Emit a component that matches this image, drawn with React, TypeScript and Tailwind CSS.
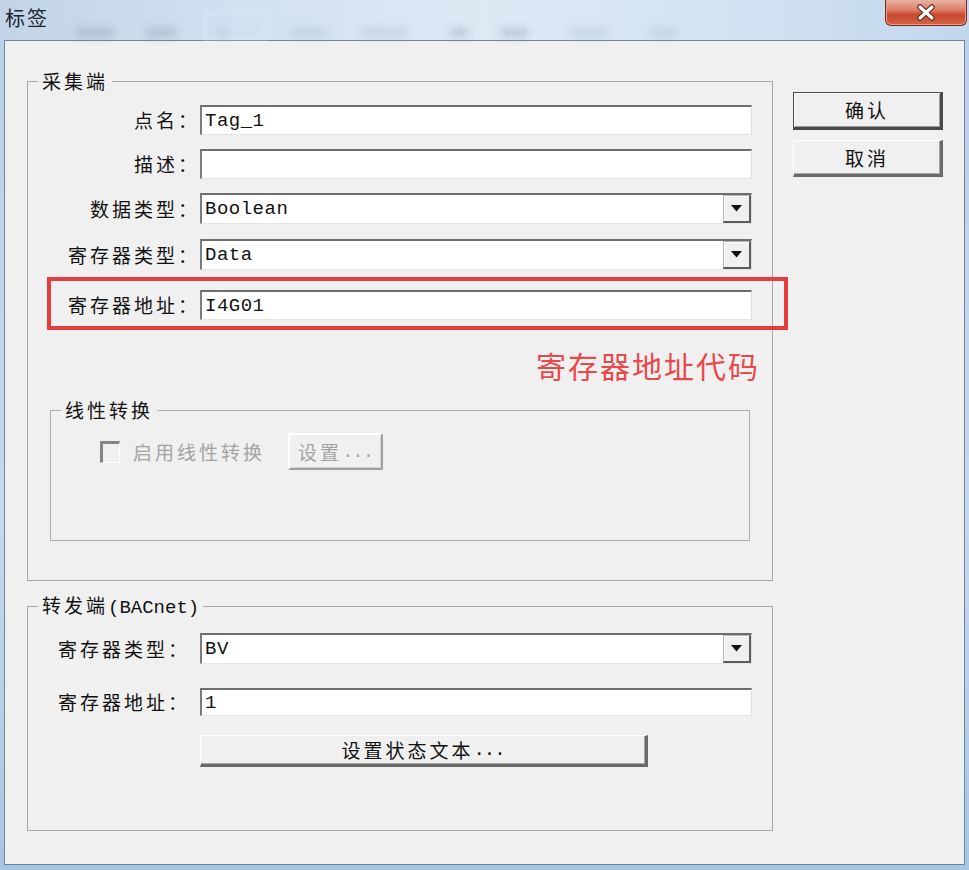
import React from "react";

const CJK = "font-['Noto_Sans_CJK_SC','Noto_Sans',sans-serif]";
const MONO = "font-['Liberation_Mono','DejaVu_Sans_Mono',monospace]";

function DropButton() {
  return (
    <div className="flex h-full w-[28px] shrink-0 items-center justify-center border-t border-l border-t-[#b4b4b4] border-l-[#b4b4b4] border-r-2 border-b-2 border-r-[#5c5c5c] border-b-[#5c5c5c] bg-[#f0f0f0] shadow-[inset_1px_1px_0_#ffffff]">
      <svg width="11" height="7" viewBox="0 0 11 7">
        <polygon points="0,0 11,0 5.5,6.5" fill="#111" />
      </svg>
    </div>
  );
}

function Field({ value, dropdown = false, width = 552 }: { value: string; dropdown?: boolean; width?: number }) {
  return (
    <div
      className="flex h-full items-center bg-white border-t-2 border-l-2 border-t-[#6e6e6e] border-l-[#7c7c7c] border-b border-r border-b-[#e4e4e4] border-r-[#dedede]"
      style={{ width }}
    >
      <span className={`flex-1 pl-[3px] text-[19px] leading-[26px] tracking-[0.5px] text-[#111] ${MONO}`}>{value}</span>
      {dropdown && <DropButton />}
    </div>
  );
}

function Label({ text, w }: { text: string; w: string }) {
  return <div className={`${w} shrink-0 text-right text-[19px] leading-[30px] tracking-[3px] text-[#111]`}>{text}</div>;
}

function CloseButton() {
  return (
    <div className="mr-[2px] flex h-[26px] w-[82px] items-center justify-center rounded-b-[6px] border border-t-0 border-[#7b2b1f] bg-[linear-gradient(180deg,#eab3a4_0%,#dc7d66_40%,#c8472f_60%,#d4654b_100%)] shadow-[inset_0_-1px_0_#e89a84,inset_1px_0_0_#e79c88,inset_-1px_0_0_#e79c88]">
      <svg width="20" height="17" viewBox="0 0 20 17">
        <path d="M4 3 L16 14 M16 3 L4 14" stroke="#6b2418" strokeWidth="5.5" strokeLinecap="round" />
        <path d="M4 3 L16 14 M16 3 L4 14" stroke="#ffffff" strokeWidth="3.2" strokeLinecap="round" />
      </svg>
    </div>
  );
}

function Blob({ w, ml, dark = true }: { w: number; ml: number; dark?: boolean }) {
  return (
    <span
      className={dark ? "h-[9px] rounded-full bg-[#8597ab] opacity-40 blur-[4px]" : "h-[9px] rounded-full bg-[#9aacc0] opacity-30 blur-[4px]"}
      style={{ width: w, marginLeft: ml }}
    />
  );
}

export default function App() {
  return (
    <div className={`flex h-[870px] w-[969px] flex-col overflow-hidden bg-[linear-gradient(180deg,#bad0e8_0%,#c6d9ee_60%,#a9c5e3_100%)] ${CJK}`}>
      {/* Title bar */}
      <div className="relative flex h-[40px] shrink-0 items-start justify-between bg-[linear-gradient(90deg,#c2d4e7_0%,#d2e1f0_25%,#dde9f5_50%,#d3e3f2_75%,#c2d7ec_100%)]">
        <span className="pl-[5px] pt-[4px] text-[20px] leading-[28px] tracking-[2px] text-[#1d2733]">标签</span>
        <CloseButton />
        <div className="pointer-events-none absolute bottom-[3px] left-0 flex items-center">
          <Blob w={40} ml={75} />
          <Blob w={32} ml={30} />
          <Blob w={12} ml={40} dark={false} />
          <Blob w={40} ml={60} dark={false} />
          <Blob w={50} ml={30} dark={false} />
          <Blob w={20} ml={40} />
          <Blob w={30} ml={30} />
          <Blob w={40} ml={40} dark={false} />
          <Blob w={30} ml={40} dark={false} />
        </div>
        <div className="pointer-events-none absolute left-[204px] top-[12px] h-[30px] w-[62px] border-2 border-[#e8f0f8] opacity-50 blur-[2px]" />
      </div>

      {/* Client area */}
      <div className="mx-[4px] mb-[5px] flex flex-1 border border-[#70849a] bg-[#f0f0f0]">
        {/* Left column */}
        <div className="flex flex-col pl-[22px] pt-[26px]">
          {/* 采集端 */}
          <fieldset className="h-[514px] w-[746px] border border-[#a8a8a8]">
            <legend className="ml-[10px] px-[4px] text-[19px] leading-[28px] tracking-[3px] text-[#111]">采集端</legend>
            <div className="flex flex-col">
              <div className="mt-[10px] flex h-[30px] items-center">
                <Label text="点名：" w="w-[172px]" />
                <div className="h-full">
                  <Field value="Tag_1" />
                </div>
              </div>
              <div className="mt-[14px] flex h-[30px] items-center">
                <Label text="描述：" w="w-[172px]" />
                <div className="h-full">
                  <Field value="" />
                </div>
              </div>
              <div className="mt-[14px] flex h-[31px] items-center">
                <Label text="数据类型：" w="w-[172px]" />
                <div className="h-full">
                  <Field value="Boolean" dropdown />
                </div>
              </div>
              <div className="mt-[15px] flex h-[31px] items-center">
                <Label text="寄存器类型：" w="w-[172px]" />
                <div className="h-full">
                  <Field value="Data" dropdown />
                </div>
              </div>
              <div className="relative mt-[20px] flex h-[30px] items-center">
                <Label text="寄存器地址：" w="w-[172px]" />
                <div className="h-full">
                  <Field value="I4G01" />
                </div>
                <div className="pointer-events-none absolute left-[19px] top-[-13px] h-[53px] w-[741px] border-[4px] border-[#e63c3e]" />
              </div>
              <div className="mt-[25px] pr-[12px] text-right text-[30px] leading-[40px] tracking-[2px] text-[#e8494b]">
                寄存器地址代码
              </div>

              {/* 线性转换 */}
              <fieldset className="ml-[22px] mt-[11px] h-[145px] w-[700px] border border-[#adadad]">
                <legend className="ml-[10px] px-[4px] text-[19px] leading-[28px] tracking-[3px] text-[#111]">线性转换</legend>
                <div className="mt-[9px] flex h-[37px] items-center pl-[49px]">
                  <div className="h-[22px] w-[20px] border-t-[3px] border-l-[3px] border-t-[#858585] border-l-[#858585] border-b border-r border-b-[#ffffff] border-r-[#ffffff] bg-[#f0f0f0]" />
                  <span className="ml-[13px] text-[19px] leading-[30px] tracking-[3px] text-[#a3a3a3]">启用线性转换</span>
                  <div className="ml-[23px] flex h-[37px] w-[95px] items-center justify-center border-t-2 border-l-2 border-t-[#ffffff] border-l-[#ffffff] border-b-2 border-r-2 border-b-[#a0a0a0] border-r-[#a0a0a0] bg-[#f0f0f0] shadow-[inset_-1px_-1px_0_#d4d4d4]">
                    <span className="text-[19px] leading-[30px] tracking-[3px] text-[#a3a3a3]">设置</span>
                    <span className={`text-[19px] leading-[30px] tracking-[-1px] text-[#a3a3a3] ${MONO}`}>...</span>
                  </div>
                </div>
              </fieldset>
            </div>
          </fieldset>

          {/* 转发端(BACnet) */}
          <fieldset className="mt-[10px] h-[240px] w-[746px] border border-[#a8a8a8]">
            <legend className="ml-[10px] px-[4px] text-[19px] leading-[28px] text-[#111]">
              <span className="tracking-[3px]">转发端</span>
              <span className={`${MONO} tracking-[0px]`}>(BACnet)</span>
            </legend>
            <div className="flex flex-col">
              <div className="mt-[11px] flex h-[31px] items-center">
                <Label text="寄存器类型：" w="w-[162px]" />
                <div className="ml-[10px] h-full">
                  <Field value="BV" dropdown />
                </div>
              </div>
              <div className="mt-[24px] flex h-[28px] items-center">
                <Label text="寄存器地址：" w="w-[162px]" />
                <div className="ml-[10px] h-full">
                  <Field value="1" />
                </div>
              </div>
              <div className="ml-[172px] mt-[19px] flex h-[32px] w-[448px] items-center justify-center border-t border-l border-t-[#ffffff] border-l-[#ffffff] border-b-[3px] border-r-[3px] border-b-[#6a6a6a] border-r-[#6a6a6a] bg-[#f0f0f0] shadow-[inset_-1px_-1px_0_#a8a8a8]">
                <span className="text-[19px] leading-[28px] tracking-[3px] text-[#111]">设置状态文本</span>
                <span className={`text-[19px] leading-[28px] tracking-[-1px] text-[#111] ${MONO}`}>...</span>
              </div>
            </div>
          </fieldset>
        </div>

        {/* Right column */}
        <div className="ml-[20px] flex flex-col pt-[51px]">
          <div className="flex h-[38px] w-[150px] items-center justify-center border border-[#4a4a4a] border-b-[3px] border-r-[3px] bg-[#f0f0f0] shadow-[inset_1px_1px_0_#ffffff,inset_-1px_-1px_0_#9a9a9a]">
            <span className="text-[19px] leading-[28px] tracking-[3px] text-[#111]">确认</span>
          </div>
          <div className="mt-[10px] flex h-[37px] w-[150px] items-center justify-center border-t border-l border-t-[#ffffff] border-l-[#ffffff] border-b-[3px] border-r-[3px] border-b-[#6a6a6a] border-r-[#6a6a6a] bg-[#f0f0f0] shadow-[inset_-1px_-1px_0_#a8a8a8]">
            <span className="text-[19px] leading-[28px] tracking-[3px] text-[#111]">取消</span>
          </div>
        </div>
      </div>
    </div>
  );
}
